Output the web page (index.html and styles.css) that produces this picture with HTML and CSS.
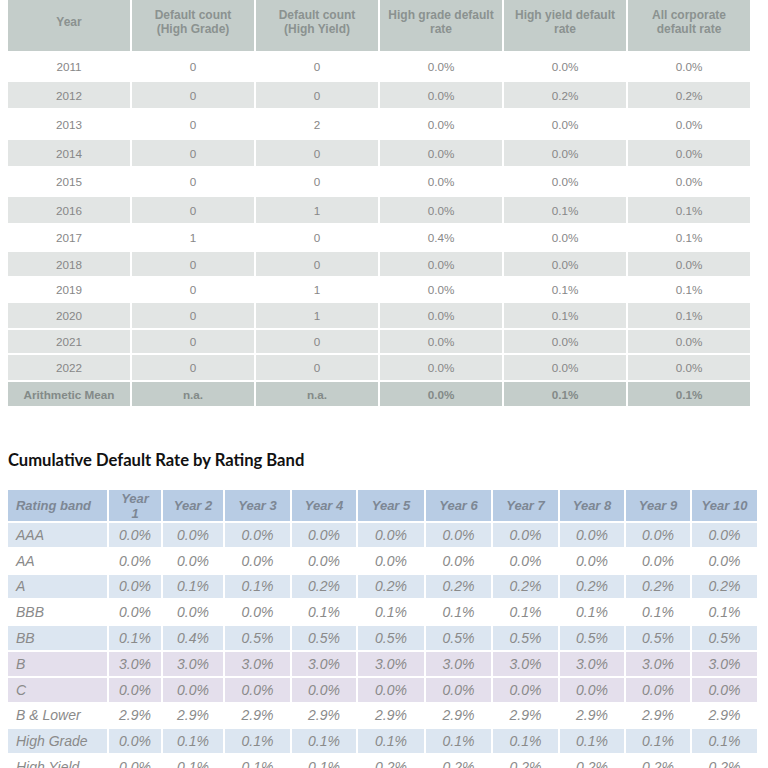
FILE: index.html
```html
<!DOCTYPE html>
<html>
<head>
<meta charset="utf-8">
<link rel="stylesheet" href="styles.css">
</head>
<body>
<div class="page">
  <div class="t1">
    <div class="tr head"><div>Year</div><div>Default count<br>(High Grade)</div><div>Default count<br>(High Yield)</div><div>High grade default<br>rate</div><div>High yield default<br>rate</div><div>All corporate<br>default rate</div></div>
    <div class="tr"><div>2011</div><div>0</div><div>0</div><div>0.0%</div><div>0.0%</div><div>0.0%</div></div>
    <div class="tr shade"><div>2012</div><div>0</div><div>0</div><div>0.0%</div><div>0.2%</div><div>0.2%</div></div>
    <div class="tr"><div>2013</div><div>0</div><div>2</div><div>0.0%</div><div>0.0%</div><div>0.0%</div></div>
    <div class="tr shade"><div>2014</div><div>0</div><div>0</div><div>0.0%</div><div>0.0%</div><div>0.0%</div></div>
    <div class="tr"><div>2015</div><div>0</div><div>0</div><div>0.0%</div><div>0.0%</div><div>0.0%</div></div>
    <div class="tr shade"><div>2016</div><div>0</div><div>1</div><div>0.0%</div><div>0.1%</div><div>0.1%</div></div>
    <div class="tr"><div>2017</div><div>1</div><div>0</div><div>0.4%</div><div>0.0%</div><div>0.1%</div></div>
    <div class="tr shade"><div>2018</div><div>0</div><div>0</div><div>0.0%</div><div>0.0%</div><div>0.0%</div></div>
    <div class="tr"><div>2019</div><div>0</div><div>1</div><div>0.0%</div><div>0.1%</div><div>0.1%</div></div>
    <div class="tr shade"><div>2020</div><div>0</div><div>1</div><div>0.0%</div><div>0.1%</div><div>0.1%</div></div>
    <div class="tr shade"><div>2021</div><div>0</div><div>0</div><div>0.0%</div><div>0.0%</div><div>0.0%</div></div>
    <div class="tr shade"><div>2022</div><div>0</div><div>0</div><div>0.0%</div><div>0.0%</div><div>0.0%</div></div>
    <div class="tr mean"><div>Arithmetic Mean</div><div>n.a.</div><div>n.a.</div><div>0.0%</div><div>0.1%</div><div>0.1%</div></div>
  </div>

  <h2 class="title">Cumulative Default Rate by Rating Band</h2>

  <div class="t2">
    <div class="tr head"><div class="band">Rating band</div><div>Year 1</div><div>Year 2</div><div>Year 3</div><div>Year 4</div><div>Year 5</div><div>Year 6</div><div>Year 7</div><div>Year 8</div><div>Year 9</div><div>Year 10</div></div>
    <div class="tr blue"><div class="band">AAA</div><div>0.0%</div><div>0.0%</div><div>0.0%</div><div>0.0%</div><div>0.0%</div><div>0.0%</div><div>0.0%</div><div>0.0%</div><div>0.0%</div><div>0.0%</div></div>
    <div class="tr"><div class="band">AA</div><div>0.0%</div><div>0.0%</div><div>0.0%</div><div>0.0%</div><div>0.0%</div><div>0.0%</div><div>0.0%</div><div>0.0%</div><div>0.0%</div><div>0.0%</div></div>
    <div class="tr blue"><div class="band">A</div><div>0.0%</div><div>0.1%</div><div>0.1%</div><div>0.2%</div><div>0.2%</div><div>0.2%</div><div>0.2%</div><div>0.2%</div><div>0.2%</div><div>0.2%</div></div>
    <div class="tr"><div class="band">BBB</div><div>0.0%</div><div>0.0%</div><div>0.0%</div><div>0.1%</div><div>0.1%</div><div>0.1%</div><div>0.1%</div><div>0.1%</div><div>0.1%</div><div>0.1%</div></div>
    <div class="tr blue"><div class="band">BB</div><div>0.1%</div><div>0.4%</div><div>0.5%</div><div>0.5%</div><div>0.5%</div><div>0.5%</div><div>0.5%</div><div>0.5%</div><div>0.5%</div><div>0.5%</div></div>
    <div class="tr lav"><div class="band">B</div><div>3.0%</div><div>3.0%</div><div>3.0%</div><div>3.0%</div><div>3.0%</div><div>3.0%</div><div>3.0%</div><div>3.0%</div><div>3.0%</div><div>3.0%</div></div>
    <div class="tr lav"><div class="band">C</div><div>0.0%</div><div>0.0%</div><div>0.0%</div><div>0.0%</div><div>0.0%</div><div>0.0%</div><div>0.0%</div><div>0.0%</div><div>0.0%</div><div>0.0%</div></div>
    <div class="tr"><div class="band">B &amp; Lower</div><div>2.9%</div><div>2.9%</div><div>2.9%</div><div>2.9%</div><div>2.9%</div><div>2.9%</div><div>2.9%</div><div>2.9%</div><div>2.9%</div><div>2.9%</div></div>
    <div class="tr blue"><div class="band">High Grade</div><div>0.0%</div><div>0.1%</div><div>0.1%</div><div>0.1%</div><div>0.1%</div><div>0.1%</div><div>0.1%</div><div>0.1%</div><div>0.1%</div><div>0.1%</div></div>
    <div class="tr"><div class="band">High Yield</div><div>0.0%</div><div>0.1%</div><div>0.1%</div><div>0.1%</div><div>0.2%</div><div>0.2%</div><div>0.2%</div><div>0.2%</div><div>0.2%</div><div>0.2%</div></div>
  </div>
</div>
</body>
</html>
```

FILE: styles.css
```css
html, body {
  margin: 0;
  padding: 0;
  background: #ffffff;
}

.page {
  padding: 0 8px;
  font-family: "Liberation Sans", Arial, sans-serif;
}

.tr {
  display: contents;
}

/* Table 1 */
.t1 {
  display: grid;
  grid-template-columns: repeat(6, 122px);
  grid-template-rows: 51px 27px 26px 28px 26px 27px 26px 25px 24px 23px 25px 23px 25px 24px;
  column-gap: 2px;
  row-gap: 2px;
  width: 742px;
}

.t1 .tr > div {
  display: flex;
  align-items: center;
  justify-content: center;
  text-align: center;
  font-size: 11.7px;
  color: #878787;
}

.t1 .head > div {
  background: #c4cdca;
  color: #8b9290;
  font-weight: bold;
  font-size: 12px;
  line-height: 13.5px;
  padding-bottom: 6px;
}

.t1 .shade > div {
  background: #e2e5e4;
}

.t1 .mean > div {
  background: #c4cdca;
  color: #838a88;
  font-weight: bold;
}

/* Title */
.title {
  margin: 43px 0 0;
  height: 41px;
  font-family: "Lato", "Open Sans", sans-serif;
  font-weight: bold;
  font-size: 16.6px;
  line-height: 22px;
  color: #111;
}

/* Table 2 */
.t2 {
  display: grid;
  grid-template-columns: 99px 52px 60px 65px 64px 66px 65px 65px 64px 64px 65px;
  grid-template-rows: 31px;
  grid-auto-rows: 23.8px;
  column-gap: 2px;
  row-gap: 2px;
}

.t2 .tr > div {
  display: flex;
  align-items: center;
  justify-content: center;
  text-align: center;
  font-style: italic;
  font-size: 14px;
  color: #8a8a8a;
}

.t2 .tr > .band {
  justify-content: flex-start;
  text-align: left;
  padding-left: 8px;
}

.t2 .head > div {
  background: #b8cce4;
  color: #7d8794;
  font-weight: bold;
  font-size: 13px;
  line-height: 15px;
  padding: 0 8px;
}

.t2 .head > .band {
  justify-content: center;
  padding-left: 0;
}

.t2 .blue > div {
  background: #dce6f1;
}

.t2 .lav > div {
  background: #e4dfec;
}
```
